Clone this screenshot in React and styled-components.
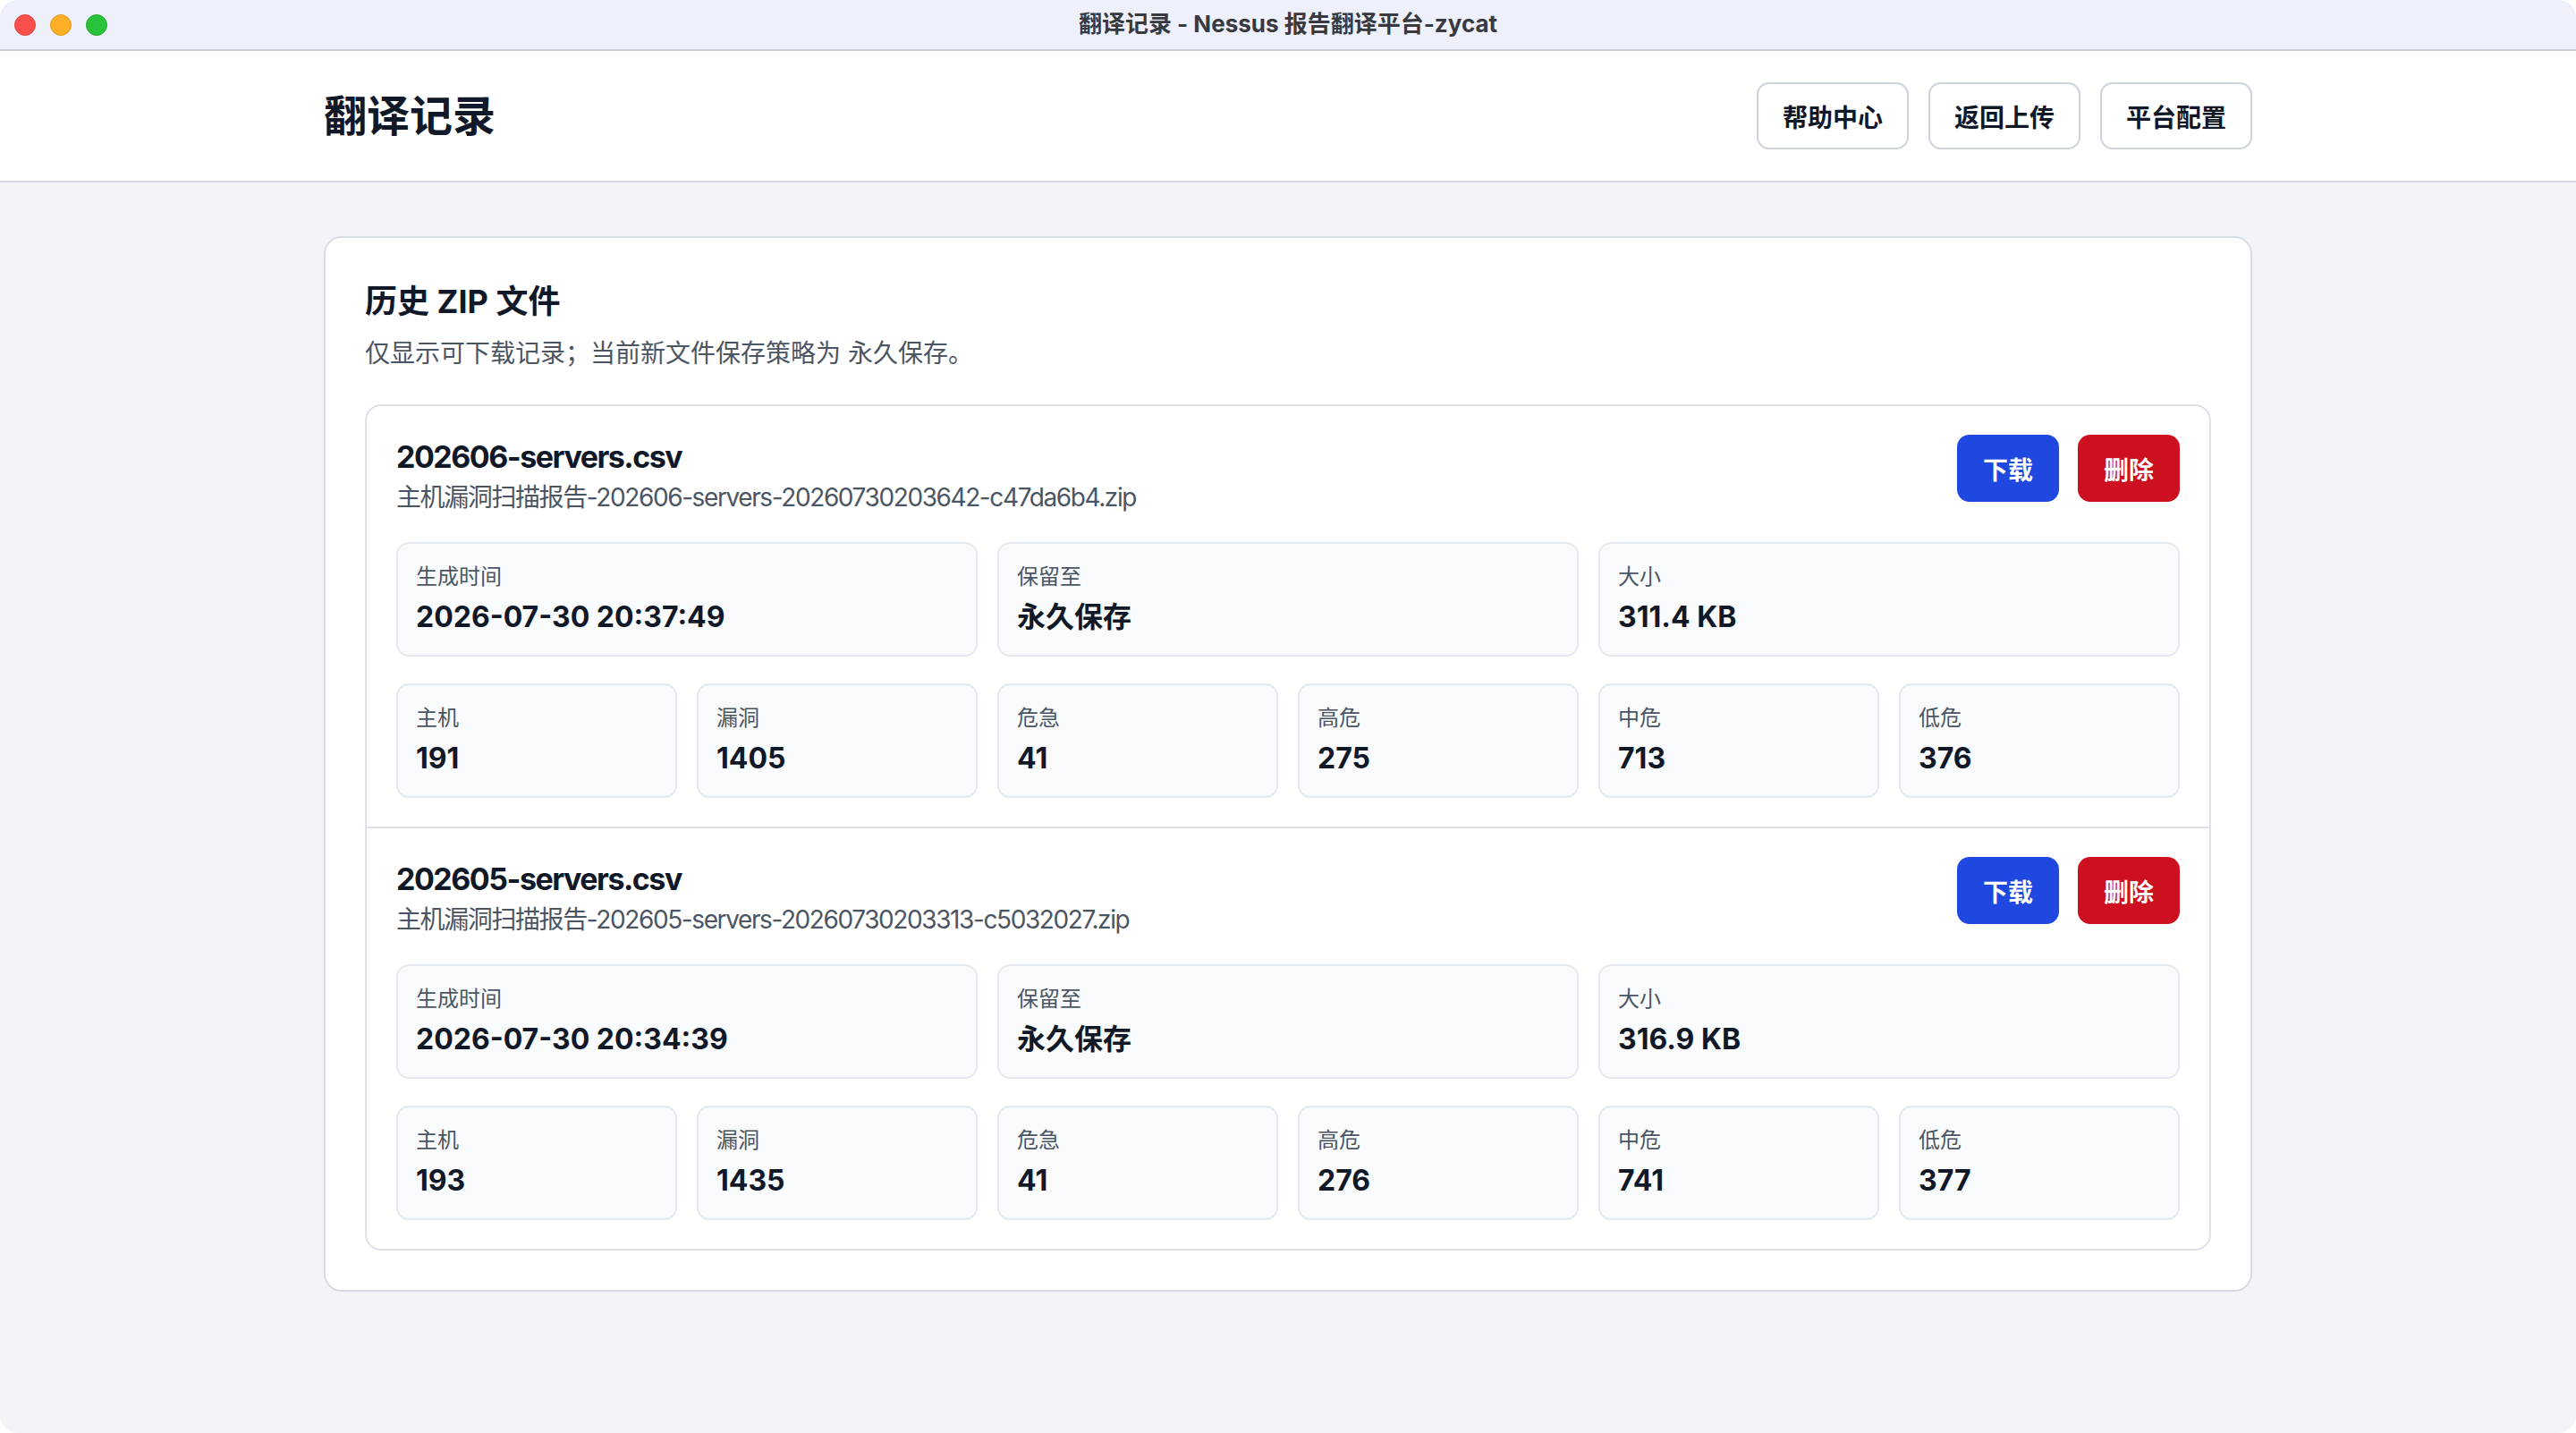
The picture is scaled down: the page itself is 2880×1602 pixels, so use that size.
import React from "react";
import styled, { createGlobalStyle } from "styled-components";

const GlobalStyle = createGlobalStyle`
  html, body {
    margin: 0;
    padding: 0;
    background: #ffffff;
  }
  * { box-sizing: border-box; }
  body {
    font-family: "Inter", "Noto Sans CJK SC", "Noto Sans", sans-serif;
    color: #111827;
  }
`;

const Window = styled.div`
  width: 2880px;
  height: 1602px;
  border-radius: 20px;
  overflow: hidden;
  background: #f3f4f8;
  display: flex;
  flex-direction: column;
`;

const TitleBar = styled.div`
  height: 57px;
  flex: none;
  background: #eef1fb;
  border-bottom: 2px solid #d0d2d8;
  display: grid;
  grid-template-columns: 1fr auto 1fr;
  align-items: center;
  padding: 0 16px;
`;

const Lights = styled.div`
  display: flex;
  gap: 16px;
  align-items: center;
`;

const Light = styled.span`
  width: 24px;
  height: 24px;
  border-radius: 50%;
  background: ${(p) => p.$color};
  border: 1px solid ${(p) => p.$edge};
`;

const WindowTitle = styled.div`
  font-size: 26px;
  line-height: 30px;
  font-weight: 700;
  color: #383a40;
  margin-top: -2px;
`;

const Header = styled.header`
  flex: none;
  background: #ffffff;
  border-bottom: 2px solid #d6dae1;
  padding: 35px 0;
`;

const Container = styled.div`
  width: 2156px;
  margin: 0 auto;
`;

const HeaderInner = styled(Container)`
  display: flex;
  align-items: center;
  justify-content: space-between;
`;

const PageTitle = styled.h1`
  margin: 0;
  font-size: 48px;
  line-height: 64px;
  font-weight: 700;
  color: #111827;
`;

const Nav = styled.nav`
  display: flex;
  gap: 22px;
`;

const NavButton = styled.button`
  height: 75px;
  padding: 0 27px;
  border: 2px solid #cdd3dc;
  border-radius: 14px;
  background: #ffffff;
  font-family: inherit;
  font-size: 28px;
  font-weight: 600;
  color: #111827;
  cursor: pointer;
`;

const Main = styled.main`
  flex: 1;
  padding-top: 60px;
`;

const Card = styled(Container)`
  background: #ffffff;
  border: 2px solid #d8dde5;
  border-radius: 20px;
  padding: 44px;
`;

const SectionTitle = styled.h2`
  margin: 0;
  font-size: 36px;
  line-height: 54px;
  font-weight: 700;
  color: #111827;
`;

const SectionDesc = styled.p`
  margin: 11px 0 0;
  font-size: 28px;
  line-height: 40px;
  color: #4b5563;
`;

const RecordList = styled.div`
  margin-top: 37px;
  border: 2px solid #dde2ea;
  border-radius: 18px;
  overflow: hidden;
`;

const Record = styled.section`
  padding: 32px 33px;
  & + & {
    border-top: 2px solid #dde2ea;
  }
`;

const RecordHead = styled.div`
  display: flex;
  justify-content: space-between;
  align-items: flex-start;
`;

const RecordName = styled.div`
  font-size: 34px;
  line-height: 50px;
  font-weight: 700;
  letter-spacing: -1.5px;
  color: #111827;
`;

const RecordFile = styled.div`
  font-size: 28px;
  line-height: 40px;
  letter-spacing: -1.4px;
  color: #4b5563;
`;

const Actions = styled.div`
  display: flex;
  gap: 21px;
`;

const ActionButton = styled.button`
  height: 75px;
  padding: 0 29px;
  border: none;
  border-radius: 14px;
  background: ${(p) => (p.$danger ? "#cc1020" : "#1f48e0")};
  color: #ffffff;
  font-family: inherit;
  font-size: 28px;
  font-weight: 700;
  cursor: pointer;
`;

const Grid = styled.div`
  display: grid;
  grid-template-columns: repeat(${(p) => p.$cols}, 1fr);
  gap: 22px;
  margin-top: 30px;
`;

const StatBox = styled.div`
  background: #f8fafc;
  border: 2px solid #e5e9f0;
  border-radius: 14px;
  padding: 20px;
`;

const StatLabel = styled.div`
  font-size: 24px;
  line-height: 34px;
  color: #4b5563;
`;

const StatValue = styled.div`
  margin-top: 6px;
  font-size: 32px;
  line-height: 44px;
  font-weight: 700;
  color: #111827;
`;

const records = [
  {
    name: "202606-servers.csv",
    file: "主机漏洞扫描报告-202606-servers-20260730203642-c47da6b4.zip",
    created: "2026-07-30 20:37:49",
    keep: "永久保存",
    size: "311.4 KB",
    stats: [
      ["主机", "191"],
      ["漏洞", "1405"],
      ["危急", "41"],
      ["高危", "275"],
      ["中危", "713"],
      ["低危", "376"],
    ],
  },
  {
    name: "202605-servers.csv",
    file: "主机漏洞扫描报告-202605-servers-20260730203313-c5032027.zip",
    created: "2026-07-30 20:34:39",
    keep: "永久保存",
    size: "316.9 KB",
    stats: [
      ["主机", "193"],
      ["漏洞", "1435"],
      ["危急", "41"],
      ["高危", "276"],
      ["中危", "741"],
      ["低危", "377"],
    ],
  },
];

function Stat({ label, value }) {
  return (
    <StatBox>
      <StatLabel>{label}</StatLabel>
      <StatValue>{value}</StatValue>
    </StatBox>
  );
}

export default function App() {
  return (
    <>
      <GlobalStyle />
      <Window>
        <TitleBar>
          <Lights>
            <Light $color="#fe4f4f" $edge="#e0443e" />
            <Light $color="#feb127" $edge="#de9a1f" />
            <Light $color="#29c33b" $edge="#1fa92f" />
          </Lights>
          <WindowTitle>翻译记录 - Nessus 报告翻译平台-zycat</WindowTitle>
          <span />
        </TitleBar>
        <Header>
          <HeaderInner>
            <PageTitle>翻译记录</PageTitle>
            <Nav>
              <NavButton>帮助中心</NavButton>
              <NavButton>返回上传</NavButton>
              <NavButton>平台配置</NavButton>
            </Nav>
          </HeaderInner>
        </Header>
        <Main>
          <Card>
            <SectionTitle>历史 ZIP 文件</SectionTitle>
            <SectionDesc>仅显示可下载记录；当前新文件保存策略为 永久保存。</SectionDesc>
            <RecordList>
              {records.map((r) => (
                <Record key={r.name}>
                  <RecordHead>
                    <div>
                      <RecordName>{r.name}</RecordName>
                      <RecordFile>{r.file}</RecordFile>
                    </div>
                    <Actions>
                      <ActionButton>下载</ActionButton>
                      <ActionButton $danger>删除</ActionButton>
                    </Actions>
                  </RecordHead>
                  <Grid $cols={3}>
                    <Stat label="生成时间" value={r.created} />
                    <Stat label="保留至" value={r.keep} />
                    <Stat label="大小" value={r.size} />
                  </Grid>
                  <Grid $cols={6}>
                    {r.stats.map(([l, v]) => (
                      <Stat key={l} label={l} value={v} />
                    ))}
                  </Grid>
                </Record>
              ))}
            </RecordList>
          </Card>
        </Main>
      </Window>
    </>
  );
}
